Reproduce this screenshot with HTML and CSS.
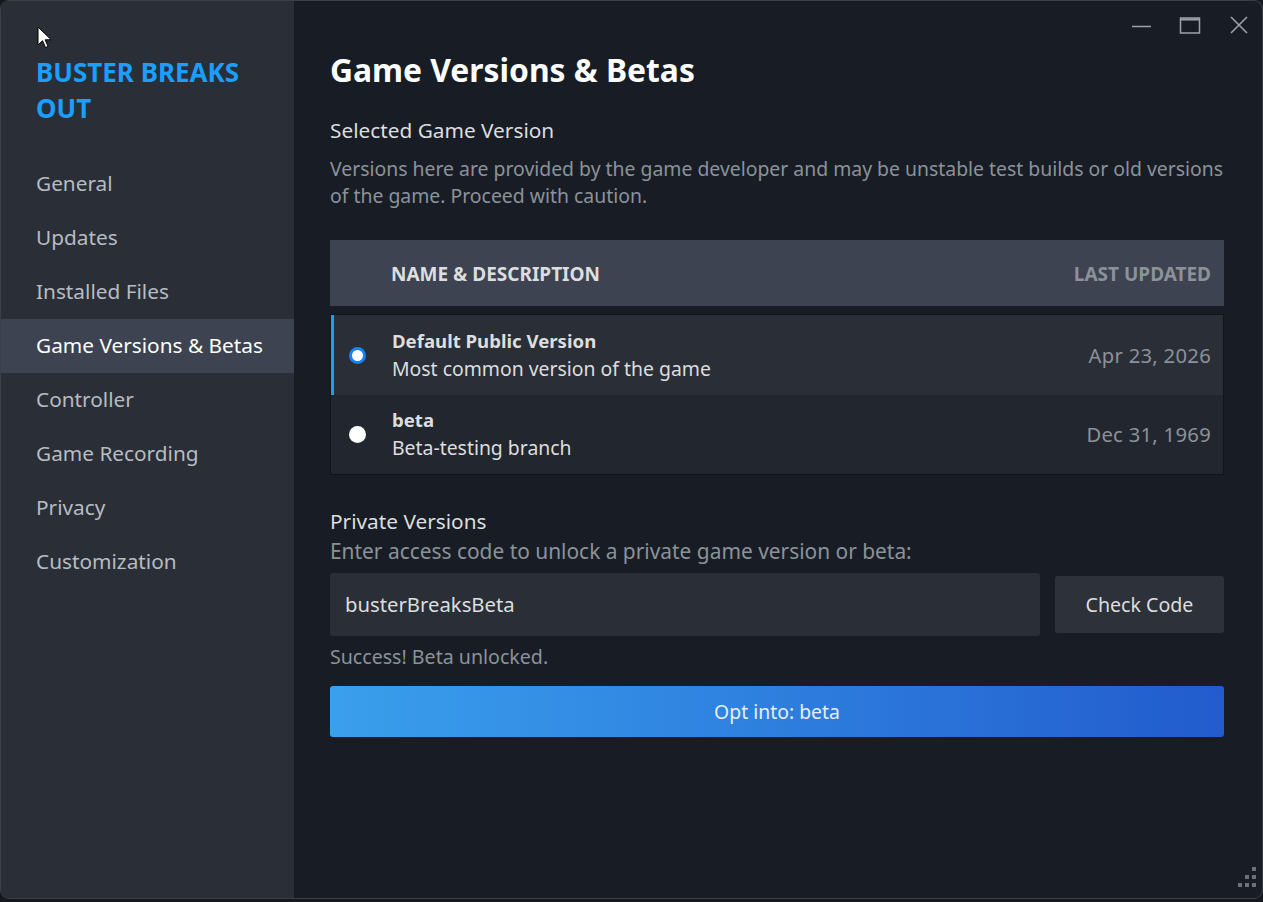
FILE: index.html
```html
<!DOCTYPE html>
<html lang="en">

<head>
    <meta charset="UTF-8">
    <meta name="viewport" content="width=device-width, initial-scale=1.0">
    <link rel="stylesheet" href="styles.css">
</head>

<body>
    <div class="window">
        <aside class="sidebar">
            <h2 class="game-title">BUSTER BREAKS OUT</h2>
            <nav class="nav">
                <div class="nav-item">General</div>
                <div class="nav-item">Updates</div>
                <div class="nav-item">Installed Files</div>
                <div class="nav-item active">Game Versions &amp; Betas</div>
                <div class="nav-item">Controller</div>
                <div class="nav-item">Game Recording</div>
                <div class="nav-item">Privacy</div>
                <div class="nav-item">Customization</div>
            </nav>
        </aside>

        <main class="content">
            <div class="window-controls">
                <svg width="22" height="22" viewBox="0 0 22 22"><path d="M2 11.5h19" stroke="#9ca3a8" stroke-width="1.5"/></svg>
                <svg width="22" height="22" viewBox="0 0 22 22"><rect x="1.5" y="3" width="19" height="15" fill="none" stroke="#9ca3a8" stroke-width="1.5"/><path d="M1.5 4.5h19" stroke="#9ca3a8" stroke-width="2"/></svg>
                <svg width="22" height="22" viewBox="0 0 22 22"><path d="M3 2l16 16M19 2L3 18" stroke="#9ca3a8" stroke-width="1.6"/></svg>
            </div>

            <h1 class="page-title">Game Versions &amp; Betas</h1>

            <h3 class="section-title">Selected Game Version</h3>
            <p class="muted desc">Versions here are provided by the game developer and may be unstable test builds or old versions of the game. Proceed with caution.</p>

            <div class="table-head">
                <span>NAME &amp; DESCRIPTION</span>
                <span class="head-right">LAST UPDATED</span>
            </div>
            <div class="table-rows">
                <div class="row selected">
                    <span class="radio checked"></span>
                    <div class="row-text">
                        <div class="row-name">Default Public Version</div>
                        <div class="row-desc">Most common version of the game</div>
                    </div>
                    <span class="row-date">Apr 23, 2026</span>
                </div>
                <div class="row">
                    <span class="radio"></span>
                    <div class="row-text">
                        <div class="row-name">beta</div>
                        <div class="row-desc">Beta-testing branch</div>
                    </div>
                    <span class="row-date">Dec 31, 1969</span>
                </div>
            </div>

            <h3 class="section-title private">Private Versions</h3>
            <p class="muted hint">Enter access code to unlock a private game version or beta:</p>

            <div class="code-row">
                <div class="code-input">busterBreaksBeta</div>
                <button class="btn-check">Check Code</button>
            </div>
            <p class="muted success">Success! Beta unlocked.</p>

            <button class="btn-opt">Opt into: beta</button>

            <div class="grip">
                <svg width="22" height="22" viewBox="0 0 22 22" fill="#6b7079">
                    <rect x="16" y="0" width="4" height="4"/>
                    <rect x="9" y="8" width="4" height="4"/><rect x="16" y="8" width="4" height="4"/>
                    <rect x="2" y="16" width="4" height="4"/><rect x="9" y="16" width="4" height="4"/><rect x="16" y="16" width="4" height="4"/>
                </svg>
            </div>
        </main>

        <svg class="cursor" width="14" height="24" viewBox="0 0 14 24">
            <path d="M1 1v18l4.5-4.3 3 6.8 2.6-1.1-3-6.6h6.1z" fill="#fff" stroke="#000" stroke-width="1"/>
        </svg>
    </div>
</body>

</html>
```

FILE: styles.css
```css
/* Page behind the window */
body {
    margin: 0;
    background: #15181d;
    font-family: "Noto Sans", "Open Sans", sans-serif;
    overflow: hidden;
}

/* Window frame */
.window {
    position: relative;
    display: flex;
    height: 897px;
    border: 1px solid #3b3f46;
    border-radius: 9px;
    overflow: hidden;
    background: #181d25;
}

/* Left nav */
.sidebar {
    width: 293px;
    flex-shrink: 0;
    background: #2a2e36;
    padding-top: 53px;
}

.game-title {
    margin: 0 0 31px 0;
    padding-left: 35px;
    padding-right: 20px;
    font-size: 26px;
    line-height: 36px;
    font-weight: 700;
    color: #1a9fff;
}

.nav-item {
    height: 54px;
    line-height: 52px;
    padding-bottom: 2px;
    box-sizing: border-box;
    padding-left: 35px;
    font-size: 20.8px;
    color: #b7bcc2;
}

.nav-item.active {
    background: #3d4350;
    color: #ffffff;
}

/* Main panel */
.content {
    position: relative;
    flex: 1;
    padding: 49px 38px 0 36px;
    color: #dcdedf;
}

.window-controls {
    position: absolute;
    top: 14px;
    right: 12px;
    display: flex;
    gap: 27px;
}

.page-title {
    margin: 0;
    font-size: 31.8px;
    line-height: 40px;
    font-weight: 700;
    color: #ffffff;
}

.section-title {
    margin: 27px 0 12px 0;
    font-size: 20.8px;
    line-height: 26px;
    font-weight: 400;
    color: #dcdedf;
}

.section-title.private {
    margin-top: 33px;
    margin-bottom: 4px;
}

.muted {
    margin: 0;
    font-size: 19.4px;
    line-height: 27px;
    color: #8b929a;
}

.muted.hint {
    font-size: 20.9px;
}

.muted.success {
    font-size: 19.6px;
}

/* Versions table */
.table-head {
    display: flex;
    justify-content: space-between;
    align-items: center;
    height: 66px;
    margin-top: 31px;
    padding: 2px 13px 0 61px;
    box-sizing: border-box;
    background: #3d4350;
    font-size: 19px;
    font-weight: 700;
}

.head-right {
    color: #8b929a;
}

.table-rows {
    margin-top: 8px;
    border: 1px solid #11151b;
}

.row {
    display: flex;
    align-items: center;
    height: 79px;
    padding: 0 12px 1px 18px;
    box-sizing: border-box;
    background: #22262e;
    font-size: 19.4px;
}

.row.selected {
    background: #2a2e37;
    box-shadow: inset 3px 0 0 #1a9fff;
    height: 80px;
}

.radio {
    width: 17px;
    height: 17px;
    margin-top: 1px;
    border-radius: 50%;
    background: #ffffff;
    flex-shrink: 0;
    box-sizing: border-box;
}

.radio.checked {
    border: 3px solid #1a7fff;
    background: #ffffff;
    box-shadow: inset 0 0 0 1.5px #ffffff;
}

.row-text {
    flex: 1;
    margin-left: 26px;
    line-height: 28px;
}

.row-name {
    font-weight: 700;
    font-size: 18.6px;
}

.row-date {
    color: #8b929a;
    font-size: 20.2px;
    letter-spacing: 0.3px;
}

/* Private code */
.code-row {
    display: flex;
    align-items: center;
    gap: 15px;
    margin-top: 8px;
}

.code-input {
    flex: 1;
    height: 63px;
    line-height: 63px;
    padding-left: 15px;
    background: #2a2e37;
    border-radius: 3px;
    font-size: 20.3px;
    color: #dcdedf;
}

.btn-check {
    width: 169px;
    height: 57px;
    border: none;
    border-radius: 3px;
    background: #2d3139;
    color: #dcdedf;
    font-family: inherit;
    font-size: 19.6px;
}

.success {
    margin-top: 7px;
}

.btn-opt {
    display: block;
    width: 100%;
    height: 51px;
    margin-top: 16px;
    border: none;
    border-radius: 3px;
    background: linear-gradient(90deg, #3a9fec 0%, #2f82e0 45%, #225bcd 100%);
    color: #e6eef8;
    font-family: inherit;
    font-size: 19.4px;
}

.grip {
    position: absolute;
    right: 4px;
    bottom: 4px;
}

.cursor {
    position: absolute;
    left: 36px;
    top: 25px;
}
```
